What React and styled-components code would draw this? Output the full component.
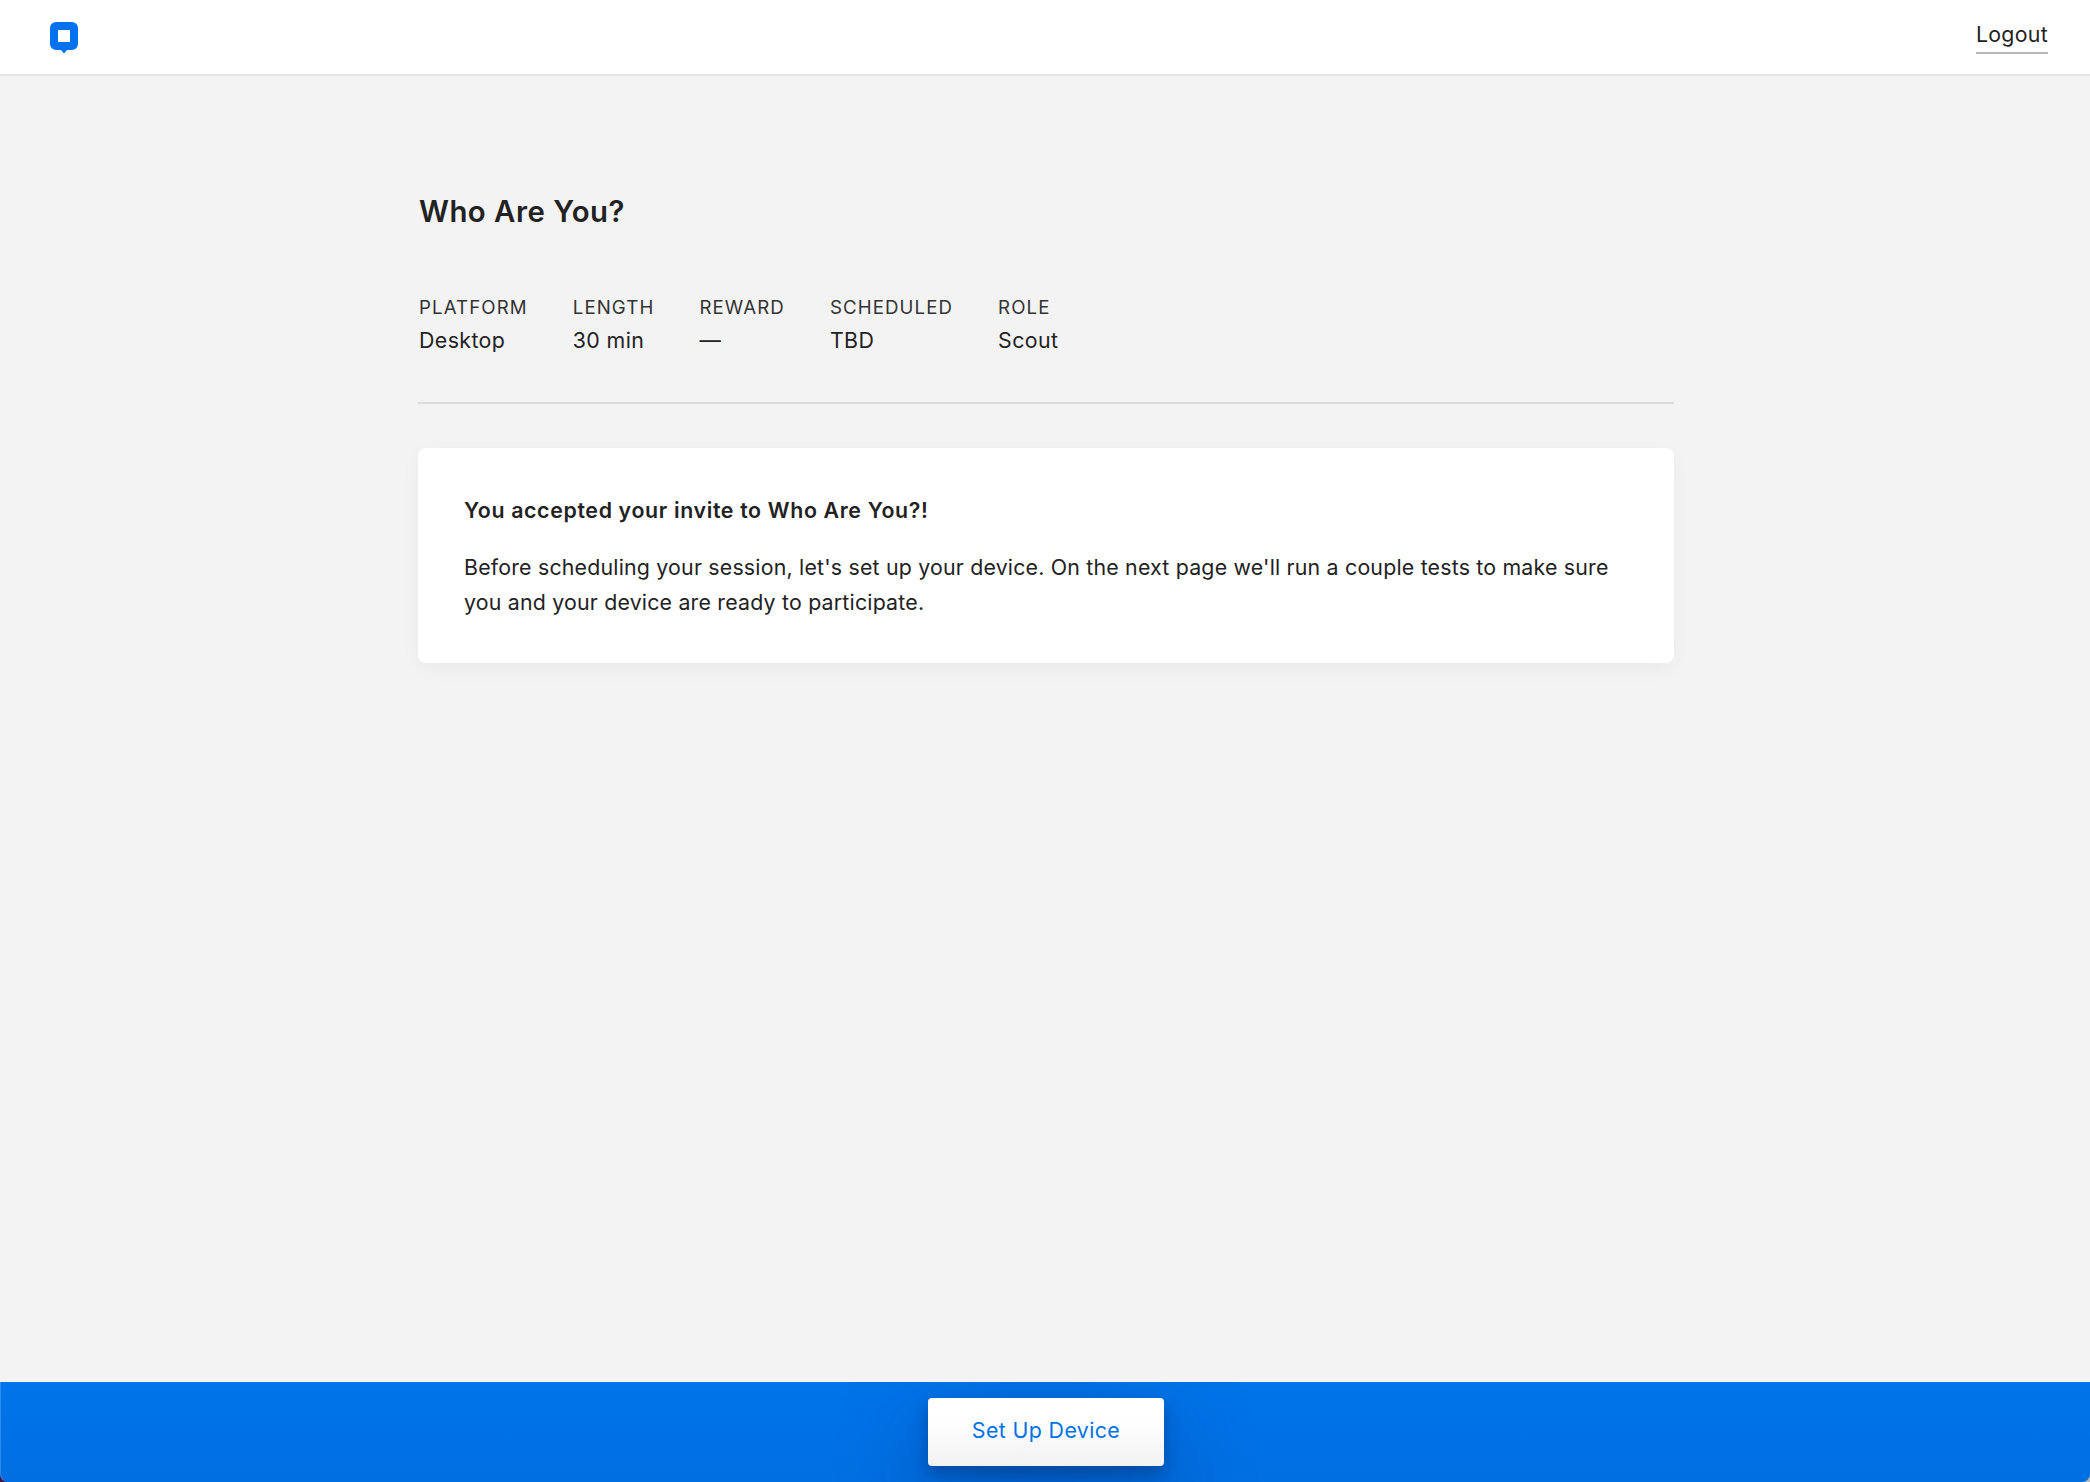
import React from 'react';
import styled, { createGlobalStyle } from 'styled-components';

const GlobalStyle = createGlobalStyle`
  html, body {
    margin: 0;
    padding: 0;
    height: 100%;
    background: #f3f3f3;
  }
  body {
    font-family: Inter, "Liberation Sans", sans-serif;
    color: #222;
    -webkit-font-smoothing: antialiased;
  }
`;

const Page = styled.div`
  display: flex;
  flex-direction: column;
  height: 1482px;
  overflow: hidden;
`;

const Header = styled.header`
  flex: none;
  height: 74px;
  display: flex;
  align-items: center;
  justify-content: space-between;
  padding: 0 42px 0 50px;
  background: #fff;
  border-bottom: 2px solid #e6e6e6;
`;

const Logo = styled.svg`
  display: block;
  width: 28px;
  height: 32px;
  margin-top: 2px;
`;

const LogoutLink = styled.a`
  display: block;
  padding-bottom: 4px;
  font-size: 21.33px;
  line-height: 28px;
  letter-spacing: 0.3px;
  color: #222;
  border-bottom: 2px solid #b8b8b8;
`;

const Main = styled.main`
  flex: 1;
  width: 1256px;
  margin-left: 418px;
  padding-top: 116px;
  box-sizing: border-box;
`;

const Title = styled.h1`
  margin: 0 0 0 1px;
  font-size: 29.33px;
  line-height: 40px;
  font-weight: 600;
  letter-spacing: 0.5px;
  color: #222;
`;

const Meta = styled.dl`
  display: flex;
  gap: 45px;
  margin: 62px 0 0;
  padding: 0 0 48px 1px;
  border-bottom: 2px solid #dcdcdc;
`;

const MetaItem = styled.div`
  display: flex;
  flex-direction: column;
  gap: 4px;
`;

const MetaLabel = styled.dt`
  font-size: 18.67px;
  line-height: 28px;
  letter-spacing: 1.1px;
  color: #333;
`;

const MetaValue = styled.dd`
  margin: 0;
  font-size: 21.33px;
  line-height: 28px;
  letter-spacing: 0.4px;
  color: #222;
`;

const Card = styled.section`
  margin-top: 44px;
  padding: 48px 46px 44px;
  background: #fff;
  border-radius: 8px;
  box-shadow: 0 6px 20px rgba(0, 0, 0, 0.04);
`;

const CardTitle = styled.h2`
  margin: 0 0 26px;
  font-size: 21.33px;
  line-height: 28px;
  font-weight: 600;
  letter-spacing: 0.65px;
  color: #222;
`;

const CardText = styled.p`
  margin: 0;
  font-size: 21.33px;
  line-height: 34.67px;
  letter-spacing: 0.2px;
  color: #222;
`;

// dark wallpaper shows through the window's rounded bottom corners
const FooterBackdrop = styled.div`
  flex: none;
  background: linear-gradient(90deg, #4a1040 50%, #b9b9b9 50%);
`;

const Footer = styled.footer`
  height: 100px;
  display: flex;
  justify-content: center;
  padding: 16px 0 0 2px;
  box-sizing: border-box;
  overflow: hidden;
  border-radius: 0 0 8px 8px;
  background: linear-gradient(180deg, #0074ea 0%, #006fe2 100%);
  box-shadow: inset 1px 0 0 rgba(255, 255, 255, 0.18);
`;

const PrimaryButton = styled.button`
  width: 236px;
  height: 68px;
  border: 0;
  border-radius: 4px;
  font-family: inherit;
  font-size: 21.33px;
  letter-spacing: 0.4px;
  padding-bottom: 5px;
  color: #0072e6;
  background: linear-gradient(180deg, #fff 30%, #f2f2f2 100%);
  box-shadow: 0 8px 16px rgba(0, 30, 80, 0.34), 0 30px 90px rgba(0, 30, 90, 0.36);
  cursor: pointer;
`;

const details = [
  { label: 'PLATFORM', value: 'Desktop' },
  { label: 'LENGTH', value: '30 min' },
  { label: 'REWARD', value: '—' },
  { label: 'SCHEDULED', value: 'TBD' },
  { label: 'ROLE', value: 'Scout' },
];

export default function App() {
  return (
    <Page>
      <GlobalStyle />
      <Header>
        <Logo viewBox="0 0 28 32" aria-label="Logo">
          <path
            fill="#0072ef"
            fillRule="evenodd"
            d="M6 0h16a6 6 0 0 1 6 6v16a6 6 0 0 1-6 6h-5l-3 3.6L11 28H6a6 6 0 0 1-6-6V6a6 6 0 0 1 6-6zM8 8v12h12V8z"
          />
        </Logo>
        <LogoutLink>Logout</LogoutLink>
      </Header>
      <Main>
        <Title>Who Are You?</Title>
        <Meta>
          {details.map((item) => (
            <MetaItem key={item.label}>
              <MetaLabel>{item.label}</MetaLabel>
              <MetaValue>{item.value}</MetaValue>
            </MetaItem>
          ))}
        </Meta>
        <Card>
          <CardTitle>You accepted your invite to Who Are You?!</CardTitle>
          <CardText>
            Before scheduling your session, let's set up your device. On the next page we'll run a couple tests to make sure you and your device are ready to participate.
          </CardText>
        </Card>
      </Main>
      <FooterBackdrop>
        <Footer>
          <PrimaryButton>Set Up Device</PrimaryButton>
        </Footer>
      </FooterBackdrop>
    </Page>
  );
}
